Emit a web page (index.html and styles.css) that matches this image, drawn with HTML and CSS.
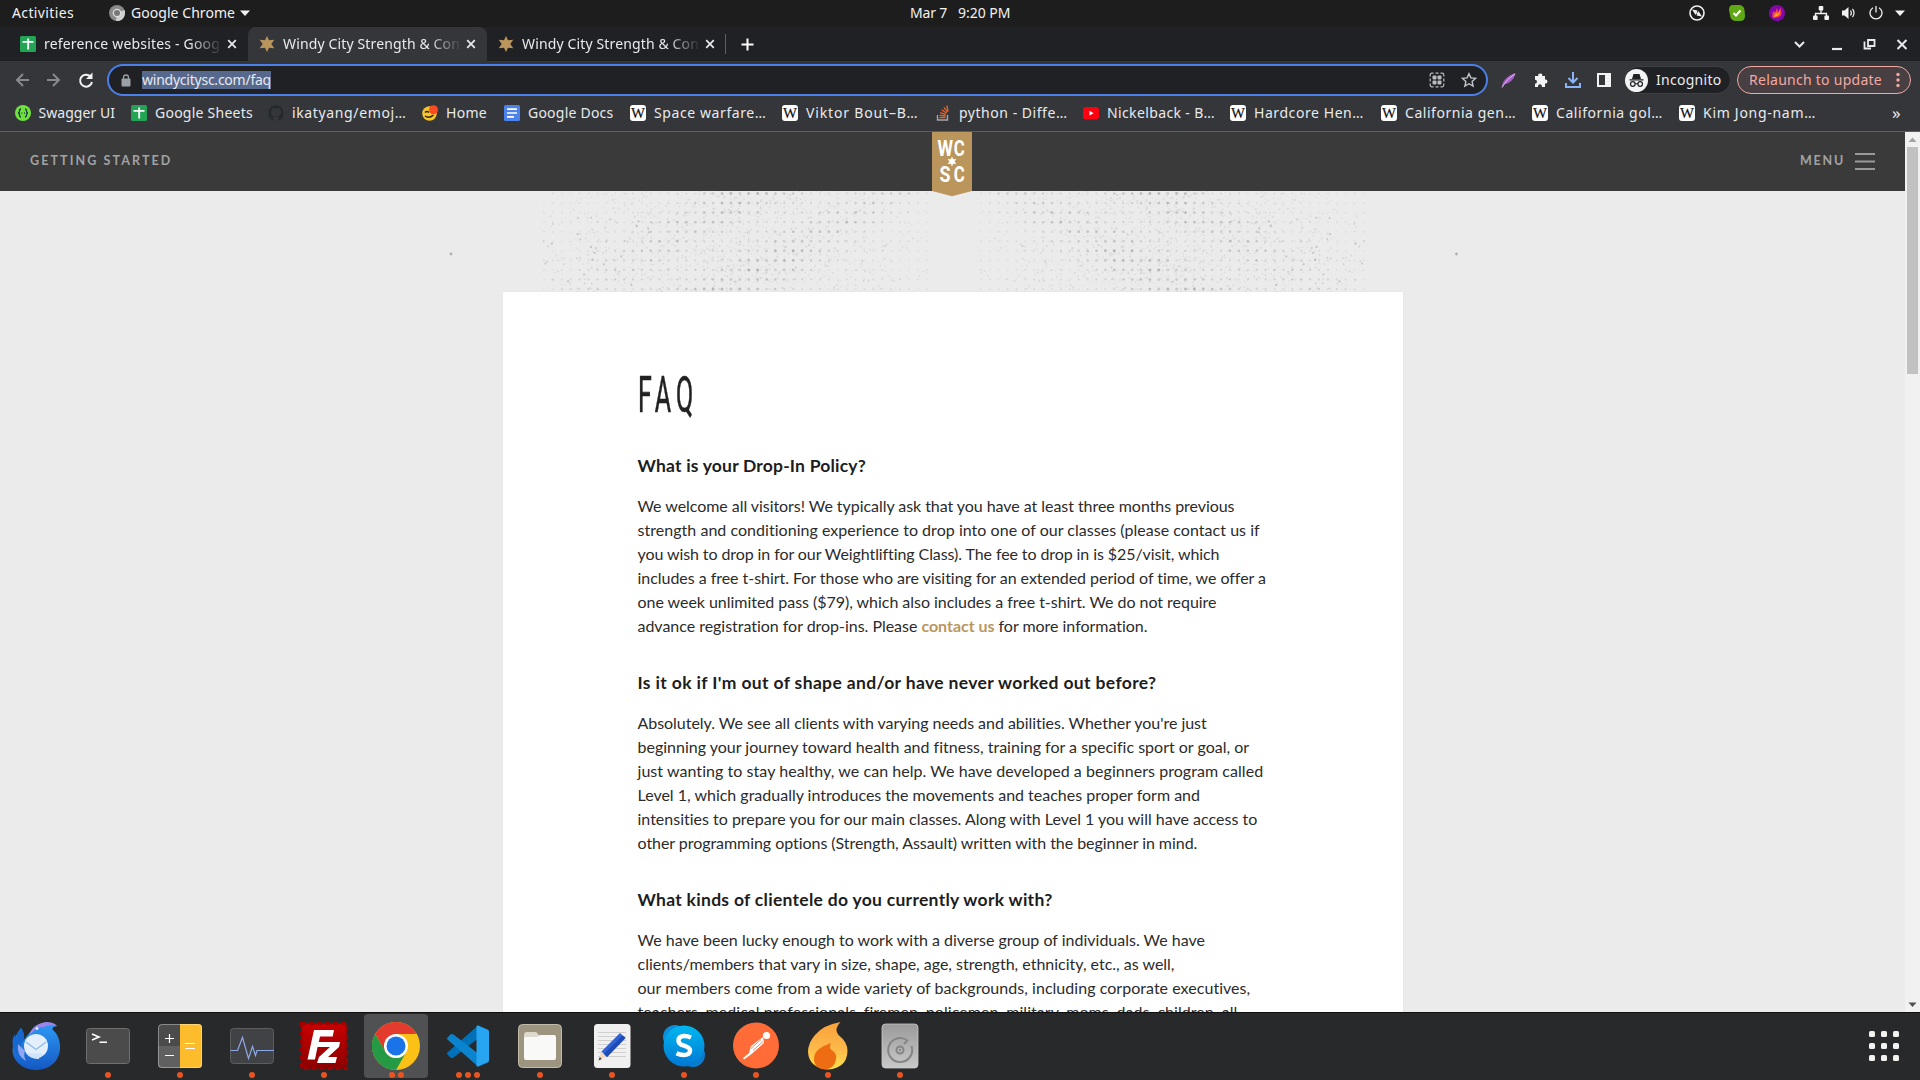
FILE: index.html
```html
<!DOCTYPE html>
<html lang="en">
<head>
<meta charset="utf-8">
<title>Windy City Strength &amp; Conditioning</title>
<link rel="stylesheet" href="styles.css">
</head>
<body>
<svg class="defs" aria-hidden="true">
  <defs>
    <linearGradient id="tbBlue" x1="0" y1="0" x2="0" y2="1"><stop offset="0" stop-color="#2d9cf5"/><stop offset="1" stop-color="#1458c4"/></linearGradient>
    <linearGradient id="skyG" x1="0" y1="0" x2="0" y2="1"><stop offset="0" stop-color="#00b7f0"/><stop offset="1" stop-color="#0078d4"/></linearGradient>
    <linearGradient id="fzG" x1="0" y1="0" x2="0" y2="1"><stop offset="0" stop-color="#c80000"/><stop offset="1" stop-color="#8c0000"/></linearGradient>
    <linearGradient id="flG" x1="0" y1="0" x2="0" y2="1"><stop offset="0" stop-color="#f9a13a"/><stop offset=".55" stop-color="#fdb84a"/><stop offset="1" stop-color="#ffe04d"/></linearGradient>
    <linearGradient id="dkG" x1="0" y1="0" x2="0" y2="1"><stop offset="0" stop-color="#9a9a9a"/><stop offset="1" stop-color="#c9c9c9"/></linearGradient>
    <symbol id="sheet" viewBox="0 0 16 16"><rect width="16" height="16" rx="1.500" fill="#23a455"/><path d="M2.500 5.800h11M8.200 2.500v11" stroke="#fff" stroke-width="1.800"/></symbol>
    <symbol id="star6" viewBox="0 0 16 16"><path d="M8 0l2 4.200 5.300-.4L12.300 8l3 4.200-5.300-.4L8 16l-2-4.200-5.300.4L3.700 8l-3-4.200 5.300.4z" fill="#bb965c"/></symbol>
    <symbol id="close" viewBox="0 0 10 10"><path d="M1.200 1.200l7.600 7.600M8.800 1.200L1.200 8.800" stroke="#e8eaed" stroke-width="1.700"/></symbol>
    <symbol id="wiki" viewBox="0 0 16 16"><rect width="16" height="16" rx="3" fill="#fff"/><text x="8" y="12.800" text-anchor="middle" textLength="14" lengthAdjust="spacingAndGlyphs" font-family="Liberation Serif, serif" font-size="14.500" fill="#111" stroke="#111" stroke-width=".2">W</text></symbol>
  </defs>
</svg>

<div class="topbar">
  <span class="tx t-act" data-w="62">Activities</span>
  <svg class="t-chrome" width="16" height="16" viewBox="0 0 16 16"><circle cx="8" cy="8" r="8" fill="#8a8a8a"/><path d="M8 8L15.500 5A8 8 0 0 1 7 15.900z" fill="#cfcfcf"/><circle cx="8" cy="8" r="4.300" fill="#ddd"/><circle cx="8" cy="8" r="3" fill="#777"/></svg>
  <span class="tx t-app" data-w="104">Google Chrome</span>
  <svg class="t-caret" width="10" height="6" viewBox="0 0 10 6"><path d="M0 .5h10L5 6z" fill="#f2f2f2"/></svg>
  <span class="tx t-date" data-w="37">Mar 7</span><span class="tx t-time" data-w="52.500">9:20 PM</span>
  <div class="tray">
    <svg width="16" height="16" viewBox="0 0 16 16" fill="none" stroke="#f2f2f2" stroke-width="1.600"><circle cx="8" cy="8" r="7"/><path d="M4.500 5.500l3 .5-1 2.500zM11.500 10.500l-3-.5 1-2.500zM4.500 5.500l7 5" stroke-width="1.400"/></svg>
    <svg width="16" height="16" viewBox="0 0 16 16"><path d="M4 0h7q4 1 4.500 5L16 11q0 5-5 5H6Q1 15 1 10L0 5Q0 0 4 0z" fill="#5fa814"/><path d="M4.500 8l2.500 2.500L11.500 5.500" fill="none" stroke="#fff" stroke-width="2"/></svg>
    <svg width="16" height="16" viewBox="0 0 16 16"><circle cx="8" cy="8" r="8" fill="#8208a8"/><path d="M4 13c-1.500-4 0-6 1-7l1 2 2-5 1 4 3-4c0 3 1 5 0 7-2 3-5 2-8 3z" fill="#ff3c4d"/><path d="M5 12c0-3 2-3 2-5l1.500 2L11 6c0 4-2 5-6 6z" fill="#ffa51c"/></svg>
    <svg class="g1" width="16" height="14" viewBox="0 0 16 14"><path d="M8 4v4M2.500 10V7.500h11V10" fill="none" stroke="#f2f2f2" stroke-width="1.300"/><rect x="5.700" width="4.600" height="4.600" rx="1" fill="#f2f2f2"/><rect y="9.400" width="4.600" height="4.600" rx="1" fill="#f2f2f2"/><rect x="11.400" y="9.400" width="4.600" height="4.600" rx="1" fill="#f2f2f2"/></svg>
    <svg class="g2" width="16" height="14" viewBox="0 0 16 14"><path d="M1 4.500h2.500L7.500 1v12l-4-3.500H1z" fill="#f2f2f2"/><path d="M9.500 4.500q1.800 2.500 0 5M11.500 2.800q3 4.200 0 8.400" fill="none" stroke="#f2f2f2" stroke-width="1.200"/></svg>
    <svg class="g3" width="14" height="14" viewBox="0 0 14 14" fill="none" stroke="#f2f2f2" stroke-width="1.300"><path d="M4 1.700a6 6 0 1 0 6 0M7 0v6.500"/></svg>
    <svg class="g4" width="10" height="6" viewBox="0 0 10 6"><path d="M0 .5h10L5 6z" fill="#f2f2f2"/></svg>
  </div>
</div>

<div class="tabs">
  <div class="tab first"><svg width="16" height="16"><use href="#sheet"/></svg><span class="tt"><span class="tx" data-w="176">reference websites - Goog</span></span><svg width="10" height="10"><use href="#close"/></svg></div>
  <div class="tab active"><svg width="16" height="16"><use href="#star6"/></svg><span class="tt"><span class="tx" data-w="177">Windy City Strength &amp; Con</span></span><svg width="10" height="10"><use href="#close"/></svg></div>
  <div class="tab"><svg width="16" height="16"><use href="#star6"/></svg><span class="tt"><span class="tx" data-w="177">Windy City Strength &amp; Con</span></span><svg width="10" height="10"><use href="#close"/></svg></div>
  <i class="sep"></i>
  <svg class="plus" width="13" height="13" viewBox="0 0 13 13"><path d="M6.500 .5v12M.5 6.500h12" stroke="#fff" stroke-width="2"/></svg>
  <svg class="wc" width="121" height="14" viewBox="0 0 121 14" fill="none" stroke="#e8eaed" stroke-width="2"><path d="M5 5l4.500 4.500L14 5"/><path d="M42 12h10" stroke-width="2.200"/><path d="M74.500 4.500v7H81M78 3h6.500v6H78z" stroke-width="1.800"/><path d="M107.500 3l9 9M116.500 3l-9 9"/></svg>
</div>

<div class="toolbar">
  <svg class="nav" width="80" height="20" viewBox="0 0 80 20" fill="none" stroke-width="2"><path d="M15 10H3M9 4l-6 6 6 6M33 10h12M39 4l6 6-6 6" stroke="#85888c"/><path d="M76.500 6.500A6 6 0 1 0 78 12" stroke="#f1f3f4"/><path d="M78.500 2.500v6.500H72z" fill="#f1f3f4"/></svg>
  <div class="omni">
    <svg width="10" height="13" viewBox="0 0 10 13"><rect x=".5" y="4.500" width="9" height="8" rx="1" fill="#9aa0a6"/><path d="M2.500 5V3.500a2.500 2.500 0 0 1 5 0V5" fill="none" stroke="#9aa0a6" stroke-width="1.300"/></svg>
    <span class="tx url" data-w="129">windycitysc.com/faq</span>
    <svg class="qr" width="16" height="16" viewBox="0 0 16 16" fill="#b9bcc0"><path d="M1.200 4.500V3q0-1.800 1.800-1.800h1.500M11.500 1.200H13q1.800 0 1.800 1.800v1.500M14.800 11.500V13q0 1.800-1.800 1.800h-1.500M4.500 14.800H3q-1.800 0-1.800-1.800v-1.500M6.500 1.200h3M6.500 14.800h3M1.200 6.500v3M14.800 6.500v3" fill="none" stroke="#b9bcc0" stroke-width="1.200"/><rect x="3.500" y="3.500" width="4" height="4" rx="1"/><rect x="8.500" y="3.500" width="4" height="4" rx="1"/><rect x="3.500" y="8.500" width="4" height="4" rx="1"/><rect x="8.500" y="8.500" width="4" height="4" rx="1"/></svg>
    <svg class="fav" width="16" height="16" viewBox="0 0 16 16"><path d="M8 1.700l1.900 4.200 4.600.5-3.400 3.100 1 4.500L8 11.700 3.900 14l1-4.500L1.500 6.400l4.600-.5z" fill="none" stroke="#c4c7ca" stroke-width="1.400"/></svg>
  </div>
  <div class="ext">
    <svg width="16" height="16" viewBox="0 0 16 16"><path d="M1 15.500C1 10 5 4 14.500 1c-1 5-4 10-11.500 11.500z" fill="#a45fc0"/><path d="M1 15.500C4 10 8 6 14 2" stroke="#e3c3ef" fill="none"/></svg>
    <svg width="16" height="16" viewBox="0 0 16 16"><path d="M2 4h3.300a2 2 0 1 1 3.900 0H12v3.600a2 2 0 1 1 0 3.900V15H8.800a2 2 0 1 0-3.700 0H2v-3.300a2 2 0 1 0 0-4z" fill="#f1f3f4"/></svg>
    <svg width="16" height="16" viewBox="0 0 16 16" fill="none" stroke="#8ab4f8" stroke-width="2"><path d="M8 0v10M3.500 6L8 10.500 12.500 6M1 11v4h14v-4"/></svg>
    <svg width="14" height="14" viewBox="0 0 14 14"><path d="M0 0h14v14H0zM2 2v10h6V2z" fill="#f1f3f4" fill-rule="evenodd"/></svg>
  </div>
  <div class="incog">
    <svg width="23" height="23" viewBox="0 0 23 23"><circle cx="11.500" cy="11.500" r="11.500" fill="#f1f3f4"/><path d="M8.500 5h6l1.500 5H7zM4.500 10.300h14v1.300h-14z" fill="#202124"/><g fill="none" stroke="#202124" stroke-width="1.200"><circle cx="7.800" cy="15" r="2.300"/><circle cx="15.200" cy="15" r="2.300"/><path d="M10.100 14.700h2.800"/></g></svg>
    <span class="tx" data-w="65.500">Incognito</span>
  </div>
  <div class="relaunch"><span class="tx" data-w="133">Relaunch to update</span>
    <svg width="4" height="16" viewBox="0 0 4 16" fill="#f2a9a4"><circle cx="2" cy="2.500" r="1.700"/><circle cx="2" cy="8" r="1.700"/><circle cx="2" cy="13.500" r="1.700"/></svg></div>
</div>

<div class="marks">
  <div><svg viewBox="0 0 16 16"><circle cx="8" cy="8" r="8" fill="#6fe03c"/><path d="M6 4q-1.500 0-1.500 2T3 8q1.500 0 1.500 2T6 12M10 4q1.500 0 1.500 2T13 8q-1.500 0-1.500 2T10 12M6.500 8h.8M9 8h.8" fill="none" stroke="#173647" stroke-width="1.300"/></svg><span class="tx" data-w="76.500">Swagger UI</span></div>
  <div><svg><use href="#sheet"/></svg><span class="tx" data-w="98">Google Sheets</span></div>
  <div><svg viewBox="0 0 16 16"><path d="M8 .3a8 8 0 0 0-2.500 15.400v-2.500c-1.500.3-2-.7-2.500-1.500 1.200.1 1.400.8 2.500.6.1-.5.300-.8.600-1C3.500 11 2.800 9 3 7c0-1 .4-1.600.9-2.100-.2-.7-.1-1.500.1-2 .8 0 1.500.5 2 .9 1.300-.3 2.700-.3 4 0 .5-.4 1.200-.8 2-.9.2.5.3 1.300.1 2 .5.500.9 1.100.9 2.100.1 2-.6 4-3.100 4.300.4.400.6 1 .6 1.700v2.700A8 8 0 0 0 8 .3z" fill="#24292e"/></svg><span class="tx" data-w="114.500">ikatyang/emoj…</span></div>
  <div><svg viewBox="0 0 16 16"><circle cx="7.500" cy="8.500" r="7.300" fill="#f6c52a"/><path d="M3 7.500q2-2 4 0M3 11q4 3 8.500-1" stroke="#2a2206" stroke-width="1.500" fill="none"/><circle cx="11.500" cy="4.700" r="4.500" fill="#fb4b22"/></svg><span class="tx" data-w="41">Home</span></div>
  <div><svg viewBox="0 0 16 16"><rect width="16" height="16" rx="1.500" fill="#4b82ec"/><path d="M3 4.200h10M3 8h10M3 11.800h7" stroke="#fff" stroke-width="1.700"/></svg><span class="tx" data-w="85.500">Google Docs</span></div>
  <div><svg><use href="#wiki"/></svg><span class="tx" data-w="112.500">Space warfare…</span></div>
  <div><svg><use href="#wiki"/></svg><span class="tx" data-w="112.500">Viktor Bout–B…</span></div>
  <div><svg viewBox="0 0 16 16" fill="none"><path d="M2.500 10v5h10v-5" stroke="#a5a7a9" stroke-width="1.400"/><path d="M4.500 12.700h6M4.600 10.300l6 .7M5.200 7.600l5.700 2M6.700 4.800l5 3.400M9 2.300l3.600 4.800M11.800.5l1.300 5.800" stroke="#e8662a" stroke-width="1.300"/></svg><span class="tx" data-w="108.500">python - Diffe…</span></div>
  <div><svg viewBox="0 0 16 16"><rect y="2" width="16" height="12.500" rx="3" fill="#f01"/><path d="M6.500 5.800v4.800L10.600 8.200z" fill="#fff"/></svg><span class="tx" data-w="108">Nickelback - B…</span></div>
  <div><svg><use href="#wiki"/></svg><span class="tx" data-w="110">Hardcore Hen…</span></div>
  <div><svg><use href="#wiki"/></svg><span class="tx" data-w="111">California gen…</span></div>
  <div><svg><use href="#wiki"/></svg><span class="tx" data-w="107">California gol…</span></div>
  <div><svg><use href="#wiki"/></svg><span class="tx" data-w="113">Kim Jong-nam…</span></div>
  <div class="more">»</div>
</div>

<div class="view">
  <div class="page">
    <header class="site">
      <span class="tx" data-w="142.500">GETTING STARTED</span>
      <span class="menu"><span class="tx" data-w="45">MENU</span><svg width="20" height="17" viewBox="0 0 20 17"><path d="M0 1h20M0 8.500h20M0 16h20" stroke="#9a9a9a" stroke-width="1.800"/></svg></span>
      <div class="ribbon"><svg width="40" height="64" viewBox="0 0 40 64"><path d="M0 0h40v59l-20 5.200L0 59z" fill="#bb965c"/><g fill="#fff" font-family="Roboto, sans-serif" font-weight="700" font-size="22"><text x="5.500" y="23.500" textLength="15.500" lengthAdjust="spacingAndGlyphs">W</text><text x="21.700" y="23.500" textLength="11" lengthAdjust="spacingAndGlyphs">C</text><text x="7.500" y="50.300" textLength="11" lengthAdjust="spacingAndGlyphs">S</text><text x="21.700" y="50.300" textLength="11" lengthAdjust="spacingAndGlyphs">C</text></g><path d="M20 24.500l1.300 2.700 3-.2-1.700 2.500 1.700 2.500-3-.2L20 34.500l-1.300-2.700-3 .2 1.700-2.500-1.700-2.500 3 .2z" fill="#fff"/></svg></div>
    </header>
    <svg class="texture" width="1905" height="101" viewBox="0 191 1905 101"></svg>
    <main class="card">
      <h1>FAQ</h1>
      <section>
        <h2><span class="tx" data-w="228.500">What is your Drop-In Policy?</span></h2>
        <p><span class="tx" data-w="597">We welcome all visitors! We typically ask that you have at least three months previous</span><br>
        <span class="tx" data-w="622.500">strength and conditioning experience to drop into one of our classes (please contact us if</span><br>
        <span class="tx" data-w="581.500">you wish to drop in for our Weightlifting Class). The fee to drop in is $25/visit, which</span><br>
        <span class="tx" data-w="628.500">includes a free t-shirt. For those who are visiting for an extended period of time, we offer a</span><br>
        <span class="tx" data-w="579">one week unlimited pass ($79), which also includes a free t-shirt. We do not require</span><br>
        <span class="tx" data-w="510.500">advance registration for drop-ins. Please <a>contact us</a> for more information.</span></p>
      </section>
      <section>
        <h2><span class="tx" data-w="519">Is it ok if I'm out of shape and/or have never worked out before?</span></h2>
        <p><span class="tx" data-w="569.500">Absolutely. We see all clients with varying needs and abilities. Whether you're just</span><br>
        <span class="tx" data-w="611">beginning your journey toward health and fitness, training for a specific sport or goal, or</span><br>
        <span class="tx" data-w="626">just wanting to stay healthy, we can help. We have developed a beginners program called</span><br>
        <span class="tx" data-w="562.500">Level 1, which gradually introduces the movements and teaches proper form and</span><br>
        <span class="tx" data-w="620">intensities to prepare you for our main classes. Along with Level 1 you will have access to</span><br>
        <span class="tx" data-w="559.500">other programming options (Strength, Assault) written with the beginner in mind.</span></p>
      </section>
      <section>
        <h2><span class="tx" data-w="415">What kinds of clientele do you currently work with?</span></h2>
        <p><span class="tx" data-w="567.500">We have been lucky enough to work with a diverse group of individuals. We have</span><br>
        <span class="tx" data-w="537">clients/members that vary in size, shape, age, strength, ethnicity, etc., as well,</span><br>
        <span class="tx" data-w="613">our members come from a wide variety of backgrounds, including corporate executives,</span><br>
        <span class="tx" data-w="599.500">teachers, medical professionals, firemen, policemen, military, moms, dads, children, all</span></p>
      </section>
    </main>
  </div>
  <div class="scroll"><svg width="15" height="15" viewBox="0 0 15 15"><path d="M3.500 10h8l-4-4.500z" fill="#a3a3a3"/></svg><i></i><svg class="dn" width="15" height="15" viewBox="0 0 15 15"><path d="M3.500 5.500h8l-4 4.500z" fill="#505050"/></svg></div>
</div>

<div class="dock">
  <div class="app"><svg viewBox="0 0 48 48"><path d="M9 6Q2 15 1 24q-2 10 5 17 7 7 18 7 11 0 18-7 7-8 6-18-1-10-7-15-2-3 4-4-6-4-13-3-9 1-13 8L10 20Q14 12 9 6z" fill="url(#tbBlue)"/><path d="M9 6Q15 14 10 21L5 34Q-1 24 1 16l2-4 1 5Q5 10 9 6z" fill="#1668cf"/><path d="M17 14Q20 2 34 0q8 0 11 4-8-2-13 1-8 0-15 9z" fill="#9a86ea"/><circle cx="25" cy="6.500" r="1.300" fill="#fff"/><path d="M6 22q-2 11 8 17-3-6-1-10z" fill="#8fa6f2"/><circle cx="24" cy="24" r="12" fill="#e3effc"/><path d="M14 31q4 6 13 6 0-4 6-5z" fill="#cfe3fa"/><path d="M14 20l10 7.500L34 20" fill="none" stroke="#8ebbea" stroke-width="1.300"/></svg></div>
  <div class="app d1"><svg viewBox="0 0 48 48"><rect x="2.500" y="6.500" width="43" height="35" rx="3" fill="#4b4b4b" stroke="#6f6f6f"/><path d="M8 12l7 3-7 3M15.500 20.300H23" fill="none" stroke="#fff" stroke-width="1.600"/></svg></div>
  <div class="app d1"><svg viewBox="0 0 48 48"><rect x="2" y="2" width="44" height="44" rx="3.500" fill="#4b4b4b"/><path d="M2 24h22v22H5.500A3.500 3.500 0 0 1 2 42.500z" fill="#606060"/><path d="M24 2h18.500A3.500 3.500 0 0 1 46 5.500v37a3.500 3.500 0 0 1-3.500 3.500H24z" fill="#fdbc2c"/><path d="M9 16.500h9M13.500 12v9M9 33.500h9M29 21.500h10M29 26.500h10" stroke="#fff" stroke-width="1.200"/><rect x="2.500" y="2.500" width="43" height="43" rx="3.500" fill="none" stroke="#fff" stroke-opacity=".35"/></svg></div>
  <div class="app d1"><svg viewBox="0 0 48 48"><rect x="2.500" y="6.500" width="43" height="35" rx="3" fill="#414246" stroke="#5d5d5d"/><path d="M2.500 28.500h7l5-13 6 21 4-12 3 9 1.500-5h17" fill="none" stroke="#8ea9e8" stroke-width="1.200"/></svg></div>
  <div class="app d1"><svg viewBox="0 0 48 48"><rect x="1.500" y="1.500" width="45" height="45" fill="url(#fzG)" stroke="#a00000" stroke-width="3" stroke-dasharray="4.500 3.500"/><path d="M14 8h20l-1.300 6.500H20L18.800 20H29l-1 5H17.500L15 37.500H7.500z" fill="#fff"/><path d="M23 20h17l-1 5-11 10h9l-1.500 6H17l2-6 11-10h-8z" fill="#fff"/></svg></div>
  <div class="app d2 on"><svg viewBox="0 0 48 48"><circle cx="24" cy="24" r="24" fill="#fbc116"/><path d="M24 12h20.800A24 24 0 0 0 3.200 12L13.600 30z" fill="#e33b2e"/><path d="M3.200 12A24 24 0 0 0 24 48l10.400-18A12 12 0 0 1 13.600 30z" fill="#249a45"/><circle cx="24" cy="24" r="12" fill="#fff"/><circle cx="24" cy="24" r="9.500" fill="#1a73e8"/></svg></div>
  <div class="app d3"><svg viewBox="0 0 48 48"><path d="M34 3.500L4 30q-2 1.500 0 3l2.500 2.500q1.500 1 3 0L45 8z" fill="#0071b8"/><path d="M34 44.500L4 18q-2-1.500 0-3l2.500-2.500q1.500-1 3 0L45 40z" fill="#0a84ce"/><path d="M34 3.500L44 8q1 .5 1 2v28q0 1.500-1 2l-10 4.500q-1.500.5-1.500-1.500V5q0-2 1.500-1.500z" fill="#28a5f0"/></svg></div>
  <div class="app d1"><svg viewBox="0 0 48 48"><rect x="2.500" y="2.500" width="43" height="43" rx="4" fill="#9d9580" stroke="#c2bba8"/><path d="M8 13q0-3 3-3h8q2 0 3 2l2 3v10H8z" fill="#dedace"/><path d="M8 17q0-2 2-2h11l3-2h14q2 0 2 2v21q0 2-2 2H10q-2 0-2-2z" fill="#f9f9f8"/></svg></div>
  <div class="app d1"><svg viewBox="0 0 48 48"><rect x="6" y="2" width="36.500" height="44" rx="3.500" fill="#f0f0f0"/><path d="M10 10.500h28M10 14.500h28M10 18.500h28M10 22.500h28M10 26.500h28M10 30.500h28M10 34.500h28" stroke="#cfcfcf"/><path d="M10.500 38.500l3-9 5 5z" fill="#f5d9b8"/><path d="M10.500 38.500l1.200-3.500 2.200 2z" fill="#444"/><path d="M13.500 29.500L32 11l5.500 5L19 35z" fill="#2f62d9"/><path d="M16 32l18.500-18.500 3 2.500L19 35z" fill="#1c4bb8"/></svg></div>
  <div class="app d1"><svg viewBox="0 0 48 48"><circle cx="15" cy="15" r="12" fill="#0a8fd8"/><circle cx="33" cy="33" r="12" fill="#0a7ccb"/><circle cx="24" cy="24" r="20.500" fill="url(#skyG)"/><path d="M31 15.500q-4-1.700-7.500-1.400-5 .5-5 4.600 0 3.300 5.500 5 6.500 2 6 5.300-.5 4-6.500 4-3.500 0-7-1.700" fill="none" stroke="#fff" stroke-width="4.500"/></svg></div>
  <div class="app d1"><svg viewBox="0 0 48 48"><circle cx="24" cy="23.500" r="23" fill="#ff6c37"/><circle cx="34.500" cy="13.500" r="3.600" fill="#fff"/><path d="M31 15l-12 9-2 7-6 5 1 1.500 7-5L32 21z" fill="#fff"/><path d="M29 17.500l-10 9M31 19.500l-10 9" stroke="#ff6c37" stroke-width=".8"/></svg></div>
  <div class="app d1"><svg viewBox="0 0 48 48"><path d="M36.500 0q-7 7-2 13 9 7 9 16Q43 46 24 47.500 5 46 4 30q0-9 7-17Q19 3 36.500 0z" fill="url(#flG)"/><path d="M27 21q-3 5 2 8 4 3 3 8-1 9-10 10.500Q10 47 10 37q0-6 5-10 6-4 12-6z" fill="#ef6d12"/></svg></div>
  <div class="app d1"><svg viewBox="0 0 48 48"><rect x="6" y="2" width="36" height="44" rx="3.500" fill="url(#dkG)" stroke="#ccc" stroke-width=".8"/><g fill="none" stroke="#858585" stroke-width="2"><path d="M30 17.500a12 12 0 1 0 5.500 6.500M28 22l4-4.500"/><circle cx="24" cy="28" r="3.500"/></g><circle cx="24" cy="28" r="1" fill="#777"/></svg></div>
  <svg class="grid" width="30" height="30" viewBox="0 0 30 30" fill="#f2f2f0"><rect width="6" height="6" rx="1.500"/><rect x="12" width="6" height="6" rx="1.500"/><rect x="24" width="6" height="6" rx="1.500"/><rect y="12" width="6" height="6" rx="1.500"/><rect x="12" y="12" width="6" height="6" rx="1.500"/><rect x="24" y="12" width="6" height="6" rx="1.500"/><rect y="24" width="6" height="6" rx="1.500"/><rect x="12" y="24" width="6" height="6" rx="1.500"/><rect x="24" y="24" width="6" height="6" rx="1.500"/></svg>
</div>
<script src="script.js"></script>
</body>
</html>
```
FILE: styles.css
```css
* { box-sizing: border-box; }
body { margin: 0; width: 1920px; height: 1080px; overflow: hidden; display: flex; flex-direction: column; background: #ebebeb; color: #e8eaed; font: 14px/18px "Noto Sans", sans-serif; }
svg { display: block; flex: none; }
.defs { position: absolute; width: 0; height: 0; }
.tx { display: inline-block; white-space: pre; }

.topbar { flex: none; height: 27px; background: #1d1d1d; display: flex; align-items: center; padding: 0 0 1px 12px; color: #f2f2f2; }
.t-chrome { margin-left: 35px; }
.t-app { margin-left: 6px; }
.t-caret { margin-left: 5px; }
.t-date { margin-left: 660px; }
.t-time { margin-left: 11px; }
.tray { margin-left: auto; display: flex; align-items: center; gap: 24px; padding-right: 15px; }
.tray .g1 { margin-left: 4px; }
.tray .g2 { margin-left: -12px; }
.tray .g3 { margin-left: -12px; }
.tray .g4 { margin-left: -12px; }

.tabs { flex: none; height: 34px; background: #202124; display: flex; align-items: center; }
.tab { width: 239px; height: 34px; display: flex; align-items: center; padding-left: 11px; border-radius: 8px 8px 0 0; }
.tab.first { width: 248px; padding-left: 20px; }
.tab.active { background: #35363a; }
.tt { width: 179px; margin: 0 4px 0 8px; overflow: hidden; -webkit-mask-image: linear-gradient(90deg, #000 145px, transparent 179px); mask-image: linear-gradient(90deg, #000 145px, transparent 179px); }
.tab.first .tt { margin-right: 4px; }
.tab .tx { vertical-align: top; }
.sep { width: 1px; height: 20px; background: #5f6063; margin-left: -1px; }
.plus { margin-left: 15px; }
.wc { margin: 0 9px 0 auto; }

.toolbar { flex: none; height: 38px; background: #35363a; display: flex; align-items: center; }
.nav { margin: 0 14px 0 14px; }
.omni { width: 1381px; height: 32px; border: 2px solid #4a80e8; border-radius: 16px; background: #202124; display: flex; align-items: center; padding: 0 9px 0 12px; margin-left: -1px; }
.url { background: #56688c; margin-left: 11px; }
.qr { margin-left: auto; }
.fav { margin-left: 16px; }
.ext { display: flex; align-items: center; gap: 16px; margin-left: 13px; }
.incog { margin-left: 13px; width: 107px; height: 28px; border-radius: 14px; background: #202124; border: 1px solid #3f4043; display: flex; align-items: center; gap: 8px; }
.relaunch { margin-left: 6px; width: 174px; height: 28px; border-radius: 14px; border: 1px solid #f2a9a4; background: #483f42; color: #f2a9a4; display: flex; align-items: center; padding-left: 11px; gap: 14px; }

.marks { flex: none; height: 33px; background: #35363a; border-bottom: 1px solid #5d5e60; display: grid; grid-template-columns: 116.500px 137px 154px 82px 126px 152px 153px 148px 147px 151px 151px 147px 213px auto; padding-left: 14.500px; padding-bottom: 4px; align-items: center; }
.marks > div { display: flex; align-items: center; gap: 8px; }
.marks svg { width: 16px; height: 16px; }
.marks .more { font-size: 17px; }

.view { height: 880px; flex: none; display: flex; overflow: hidden; }
.page { width: 1905px; background: #ebebeb; display: flex; flex-direction: column; align-items: center; color: #222; }
.site { flex: none; width: 100%; height: 59px; background: #3a3a3a; display: flex; align-items: center; justify-content: space-between; padding: 0 30px 2px; position: relative; color: #a2a2a2; font: 700 12.500px/16px Lato, sans-serif; }
.menu { display: flex; align-items: center; gap: 10px; padding-top: 1px; }
.ribbon { position: absolute; left: 932px; top: 0; }
.texture { flex: none; }
.card { width: 900px; flex: 1 0 900px; background: #fff; padding: 73px 135px 0; box-shadow: 0 0 1px #ddd; }
h1 { margin: 0 0 29px; font: 400 50px/60px Roboto, sans-serif; letter-spacing: 10px; transform: scaleX(.5); transform-origin: 0 0; white-space: nowrap; -webkit-text-stroke: .6px #222; }
section { height: 217px; }
h2 { margin: 0; font: 700 17.500px/24px Lato, sans-serif; color: #1d1d1d; }
p { margin: 16px 0 0; font: 400 16px/24px Lato, sans-serif; white-space: nowrap; color: #2b2b2b; }
p .tx { vertical-align: top; }
a { color: #bb965c; font-weight: 700; }

.scroll { width: 15px; background: #f1f1f1; display: flex; flex-direction: column; align-items: center; }
.scroll i { width: 11px; height: 227px; background: #c1c1c1; }
.scroll .dn { margin-top: auto; }

.dock { flex: none; height: 68px; background: #28292b; border-top: 1px solid #0f0f10; display: flex; align-items: flex-start; padding: 1px 0 0 4px; gap: 8px; }
.app { width: 64px; height: 64px; padding: 8px; border-radius: 4px; position: relative; }
.app svg { width: 48px; height: 48px; }
.on { background: #505153; }
.d1::after, .d2::after, .d3::after { content: ""; position: absolute; left: 29px; top: 58px; width: 6px; height: 6px; border-radius: 50%; background: #e95420; }
.d2::after { left: 24.500px; box-shadow: 9px 0 #e95420; }
.d3::after { left: 29px; box-shadow: -9px 0 #e95420, 9px 0 #e95420; }
.grid { margin: 17px 21px 0 auto; }
```
FILE: script.js
```js
// Spread each label over its set width with letter spacing.
document.querySelectorAll('.tx[data-w]').forEach(function (el) {
  var natural = el.getBoundingClientRect().width;
  var count = el.textContent.length;
  el.style.letterSpacing = ((parseFloat(el.dataset.w) - natural) / count) + 'px';
});

// Mirrored halftone texture behind the card.
(function () {
  var seed = 7, out = '';
  function rnd() { seed = (seed * 16807) % 2147483647; return seed / 2147483647; }
  function dot(x, y, r, o) {
    [x, 1907.5 - x].forEach(function (cx) {
      out += '<circle cx="' + cx.toFixed(1) + '" cy="' + y.toFixed(1) + '" r="' + r.toFixed(2) + '" fill="#888" opacity="' + o.toFixed(2) + '"/>';
    });
  }
  for (var j = 0; j < 11; j++) {
    var y = 193.5 + j * 9.55;
    for (var i = 0; i < 44; i++) {
      var x = 544 + i * 8.9;
      var peak = 790 - j * 8;
      var s = Math.min(1, Math.max(0.08, 1.35 - Math.abs(x - peak) / 135));
      var wave = 0.65 + 0.35 * Math.sin(i * 0.35 + j * 0.7);
      dot(x, y, 0.9 + 0.6 * s * wave, (0.15 + 0.42 * s * wave) * (0.45 + 0.55 * rnd()));
    }
  }
  for (var k = 0; k < 1300; k++) {
    dot(545 + (rnd() + rnd()) * 195, 191 + rnd() * 101, 0.5 + rnd() * 0.5, 0.06 + rnd() * 0.16);
  }
  for (var m = 0; m < 60; m++) {
    dot(543 + rnd() * 110, 215 + rnd() * 75, 0.7 + rnd() * 0.5, 0.15 + rnd() * 0.3);
  }
  dot(451, 254, 1.4, 0.6);
  document.querySelector('.texture').innerHTML = out;
})();
```
